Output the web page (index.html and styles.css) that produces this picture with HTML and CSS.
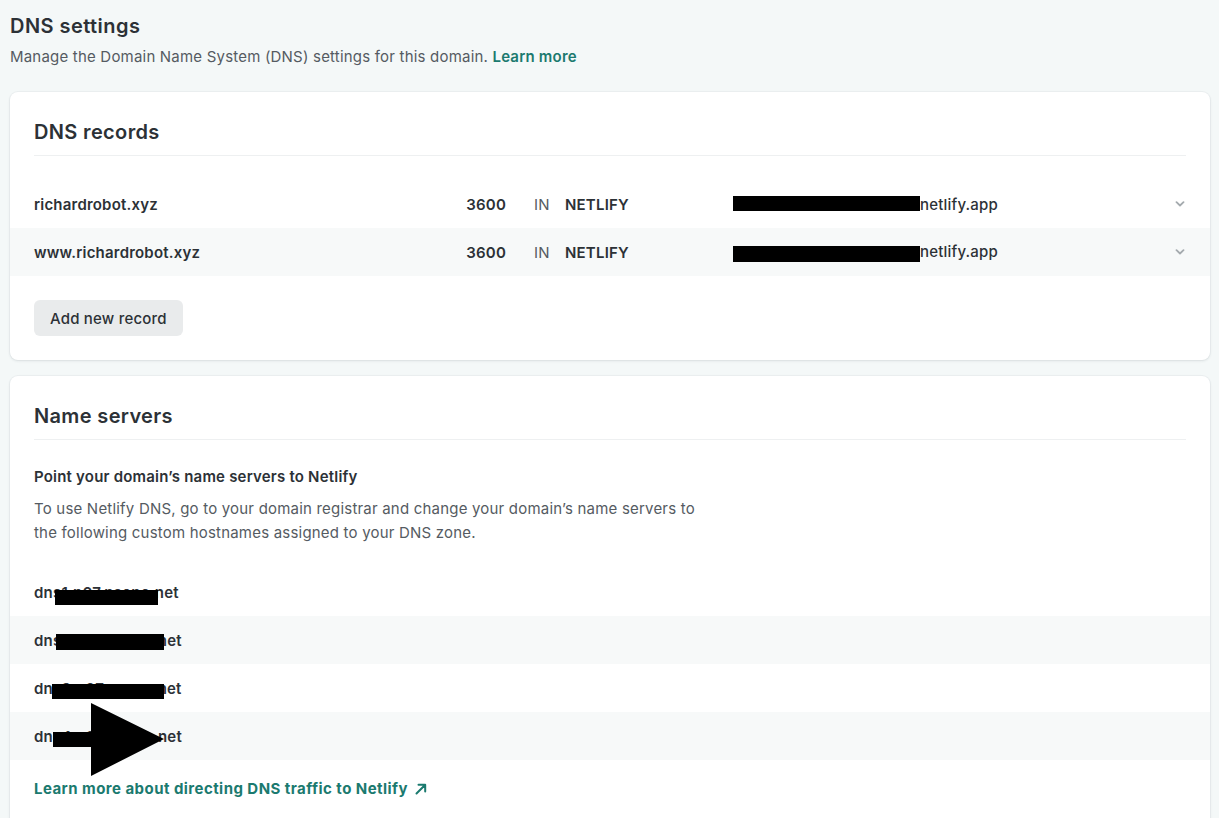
FILE: index.html
```html
<!DOCTYPE html>
<html lang="en">
<head>
<meta charset="utf-8">
<title>DNS settings</title>
<link rel="stylesheet" href="styles.css">
</head>
<body>
<main class="page">
  <header class="page-head">
    <h1 class="page-title">DNS settings</h1>
    <p class="page-sub">Manage the Domain Name System (DNS) settings for this domain. <a class="link" href="#">Learn more</a></p>
  </header>

  <section class="card">
    <h2 class="card-title">DNS records</h2>
    <div class="records">
      <div class="rec-row">
        <span class="rec-name">richardrobot.xyz</span>
        <span class="rec-ttl">3600</span>
        <span class="rec-in">IN</span>
        <span class="rec-type">NETLIFY</span>
        <span class="rec-val"><span class="redact r1">richardrobot</span>netlify.app</span>
        <span class="rec-chev"><svg width="10" height="6" viewBox="0 0 10 6"><path d="M1.5 1.2 L5 4.5 L8.5 1.2" fill="none" stroke="#a4aaae" stroke-width="1.8" stroke-linecap="round" stroke-linejoin="round"/></svg></span>
      </div>
      <div class="rec-row alt">
        <span class="rec-name">www.richardrobot.xyz</span>
        <span class="rec-ttl">3600</span>
        <span class="rec-in">IN</span>
        <span class="rec-type">NETLIFY</span>
        <span class="rec-val"><span class="redact r2">richardrobot</span>netlify.app</span>
        <span class="rec-chev"><svg width="10" height="6" viewBox="0 0 10 6"><path d="M1.5 1.2 L5 4.5 L8.5 1.2" fill="none" stroke="#a4aaae" stroke-width="1.8" stroke-linecap="round" stroke-linejoin="round"/></svg></span>
      </div>
    </div>
    <div class="card-actions">
      <button class="btn" type="button">Add new record</button>
    </div>
  </section>

  <section class="card card-ns">
    <h2 class="card-title">Name servers</h2>
    <h3 class="ns-lead">Point your domain’s name servers to Netlify</h3>
    <p class="ns-text">To use Netlify DNS, go to your domain registrar and change your domain’s name servers to the following custom hostnames assigned to your DNS zone.</p>
    <div class="ns-list">
      <div class="ns-row"><span class="ns-name">dns1.p07.nsone.net</span><span class="ns-mask m1"></span></div>
      <div class="ns-row alt"><span class="ns-name">dns2.p07.nsone.net</span><span class="ns-mask m2"></span></div>
      <div class="ns-row"><span class="ns-name">dns3.p07.nsone.net</span><span class="ns-mask m3"></span></div>
      <div class="ns-row alt"><span class="ns-name">dns4.p07.nsone.net</span>
        <svg class="ns-arrow" width="112" height="74" viewBox="0 0 112 74"><path d="M0 29 H38 V0 L111 36 L38 73 V44 H0 Z" fill="#000"/></svg>
      </div>
    </div>
    <a class="link ns-more" href="#">Learn more about directing DNS traffic to Netlify <svg class="ext" width="12" height="12" viewBox="0 0 12 12"><path d="M1.5 10.5 L10 2 M3.5 1.8 H10.2 V8.5" fill="none" stroke="#1b7a6f" stroke-width="2" stroke-linecap="round" stroke-linejoin="round"/></svg></a>
  </section>
</main>
</body>
</html>
```

FILE: styles.css
```css
* { box-sizing: border-box; }

html, body {
  margin: 0;
  padding: 0;
  background: #f4f8f8;
}

body {
  font-family: Inter, "Noto Sans", "Liberation Sans", sans-serif;
  color: #2c3136;
  font-size: 15px;
  letter-spacing: 0.2px;
  -webkit-font-smoothing: antialiased;
}

.page {
  padding: 13px 9px 0 10px;
  height: 818px;
  overflow: hidden;
}

.page-head { margin-bottom: 23px; }

.page-title {
  margin: 0;
  font-size: 20px;
  line-height: 26px;
  font-weight: 600;
  letter-spacing: 0.45px;
  color: #2c3136;
}

.page-sub {
  margin: 6px 0 0;
  font-size: 15px;
  line-height: 24px;
  color: #555b62;
}

.link {
  color: #1b7a6f;
  font-weight: 600;
  text-decoration: none;
}

.card {
  background: #fff;
  border-radius: 8px;
  box-shadow: 0 1px 3px rgba(30, 45, 55, 0.10), 0 0 0 1px rgba(30, 45, 55, 0.03);
  margin-bottom: 16px;
  padding: 24px 0;
}

.card-title {
  margin: 0 24px;
  padding: 3px 0 10px;
  font-size: 20px;
  line-height: 26px;
  font-weight: 600;
  letter-spacing: 0.35px;
  color: #2c3136;
  border-bottom: 1px solid #eef0f1;
}

.records { margin-top: 24px; }

.rec-row {
  display: grid;
  grid-template-columns: 390px 82px 59px 168px 1fr 20px;
  align-items: center;
  height: 48px;
  padding: 0 24px;
  font-size: 15px;
}

.alt { background: #f7f9f9; }

.rec-name { font-weight: 600; }
.rec-ttl { font-weight: 600; text-align: right; }
.rec-in { color: #555b62; padding-left: 28px; }
.rec-type { font-weight: 600; }
.rec-val { font-weight: 500; white-space: nowrap; }
.rec-chev { display: flex; justify-content: flex-end; padding-right: 1px; }

.redact {
  display: inline-block;
  width: 187px;
  background: #000;
  color: #000;
  white-space: nowrap;
  vertical-align: middle;
  font-size: 12px;
  line-height: 15px;
  height: 15px;
  margin-top: -4px;
}
.redact.r2 { height: 16px; margin-top: 1px; }

.card-actions { padding: 24px 24px 0; }

.btn {
  font-family: inherit;
  font-size: 15px;
  font-weight: 500;
  letter-spacing: 0.2px;
  color: #2c3136;
  background: #e9ebec;
  border: 0;
  border-radius: 6px;
  height: 36px;
  padding: 0 16px;
  cursor: pointer;
}

.card-ns { padding-bottom: 40px; }

.ns-lead {
  margin: 25px 24px 0;
  font-size: 15px;
  line-height: 24px;
  font-weight: 600;
}

.ns-text {
  margin: 8px 24px 0;
  max-width: 672px;
  font-size: 15px;
  line-height: 24px;
  color: #555b62;
}

.ns-list { margin-top: 23px; }

.ns-row {
  position: relative;
  height: 48px;
  padding: 0 24px;
  display: flex;
  align-items: center;
  font-weight: 600;
}

.ns-mask {
  position: absolute;
  background: #000;
}
.m1 { left: 45px; top: 22px; width: 103px; height: 15px; }
.m2 { left: 46px; top: 18px; width: 108px; height: 16px; }
.m3 { left: 42px; top: 20px; width: 112px; height: 15px; }

.ns-arrow {
  position: absolute;
  left: 43px;
  top: -9px;
}

.ns-more {
  display: inline-flex;
  align-items: center;
  gap: 7px;
  margin: 17px 24px 0;
  line-height: 24px;
  font-weight: 700;
  letter-spacing: 0.45px;
}

.ext { margin-top: 0; }
```
